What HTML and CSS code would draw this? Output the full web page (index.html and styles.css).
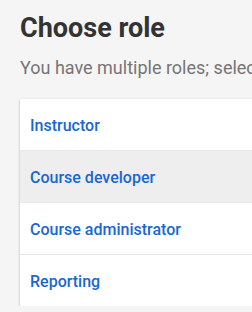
FILE: index.html
```html
<!DOCTYPE html>
<html lang="en">
	<head>
		<meta charset="UTF-8" />
		<meta name="viewport" content="width=device-width, initial-scale=1.0" />
		<title>Choose role</title>
		<link rel="stylesheet" href="styles.css">
	</head>
	<body>
		<div class="page">
			<h1 class="page-title">Choose role</h1>
			<p class="page-subtitle">You have multiple roles; select the one you want to use.</p>
			<div class="role-list">
				<a class="role" href="#">Instructor</a>
				<a class="role active" href="#">Course developer</a>
				<a class="role" href="#">Course administrator</a>
				<a class="role" href="#">Reporting</a>
			</div>
		</div>
	</body>
</html>
```
FILE: styles.css
```css
body {
	font-family: Roboto, "Liberation Sans", sans-serif;
	background-color: #f5f5f5;
	margin: 0;
	overflow: hidden;
}
.page {
	padding: 10px 0 0 20px;
	width: 460px;
}
.page-title {
	font-size: 27px;
	font-weight: 700;
	color: #333333;
	line-height: 36px;
	margin: 0 0 10px;
}
.page-subtitle {
	font-size: 18px;
	color: #757575;
	line-height: 24px;
	margin: 0 0 19px;
	white-space: nowrap;
}
.role-list {
	background-color: #fff;
	box-shadow: 0 1px 3px rgba(0, 0, 0, 0.2), 0 1px 1px rgba(0, 0, 0, 0.14), 0 2px 1px -1px rgba(0, 0, 0, 0.12);
}
.role {
	display: block;
	padding: 3px 10px 0;
	line-height: 48px;
	font-size: 16px;
	font-weight: 500;
	color: #1967d2;
	text-decoration: none;
	border-bottom: 1px solid #e8e8e8;
}
.role:last-child {
	border-bottom: none;
}
.role.active {
	background-color: #eeeeee;
}
```
